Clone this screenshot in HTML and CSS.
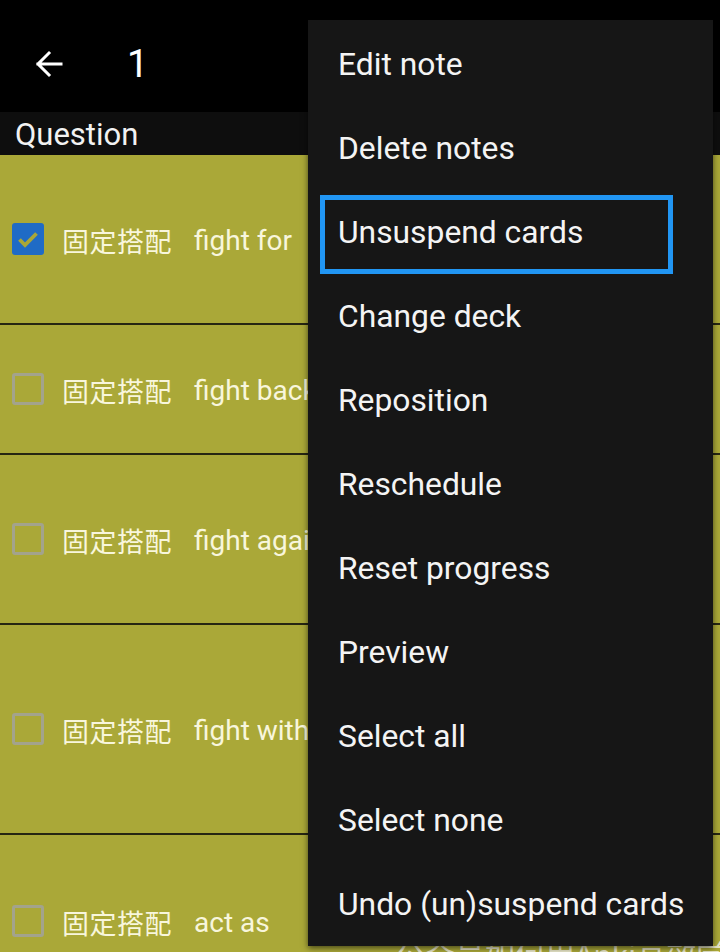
FILE: index.html
```html
<!DOCTYPE html>
<html>
<head>
<meta charset="utf-8">
<link rel="stylesheet" href="styles.css">
</head>
<body>
<div class="screen">
  <header class="appbar">
    <svg class="back" viewBox="0 0 28 28" width="28" height="28"><path d="M26 14H3M14 3L3 14l11 11" fill="none" stroke="#fff" stroke-width="3" stroke-linecap="square"/></svg>
    <span class="title">1</span>
  </header>
  <div class="colhead">Question</div>
  <div class="list">
    <div class="row h168">
      <span class="cb checked"><svg viewBox="0 0 32 32" width="32" height="32"><path d="M7.5 16.5l5.5 5.5L24.5 10.5" fill="none" stroke="#a9a738" stroke-width="3.8"/></svg></span>
      <span class="q"><span class="zh">固定搭配</span><span class="en">fight for</span></span>
    </div>
    <div class="row h128">
      <span class="cb"></span>
      <span class="q"><span class="zh">固定搭配</span><span class="en">fight back</span></span>
    </div>
    <div class="row h168">
      <span class="cb"></span>
      <span class="q"><span class="zh">固定搭配</span><span class="en">fight against</span></span>
    </div>
    <div class="row h208">
      <span class="cb"></span>
      <span class="q"><span class="zh">固定搭配</span><span class="en">fight with</span></span>
    </div>
    <div class="row h172">
      <span class="cb"></span>
      <span class="q"><span class="zh">固定搭配</span><span class="en">act as</span></span>
    </div>
  </div>
  <div class="watermark">公众号如何用Anki高效学习</div>
  <ul class="menu">
    <li>Edit note</li>
    <li>Delete notes</li>
    <li class="focused">Unsuspend cards</li>
    <li>Change deck</li>
    <li>Reposition</li>
    <li>Reschedule</li>
    <li>Reset progress</li>
    <li>Preview</li>
    <li>Select all</li>
    <li>Select none</li>
    <li>Undo (un)suspend cards</li>
  </ul>
</div>
</body>
</html>
```
FILE: styles.css
```css
html, body {
  margin: 0;
  padding: 0;
  background: #000;
}
.screen {
  position: relative;
  width: 720px;
  height: 952px;
  overflow: hidden;
  font-family: Roboto, "Noto Sans CJK SC", sans-serif;
  color: #fff;
}
.appbar {
  box-sizing: border-box;
  height: 112px;
  padding-top: 16px;
  background: #000;
  display: flex;
  align-items: center;
}
.back {
  margin-left: 35px;
}
.title {
  margin-left: 64px;
  font-size: 38px;
  line-height: 1;
  color: #fff;
}
.colhead {
  height: 43px;
  background: #0e0e0e;
  font-size: 31px;
  line-height: 45px;
  padding-left: 15px;
  color: #f2f2f2;
}
.list {
  background: #aaa838;
}
.row {
  display: flex;
  align-items: center;
  background: #aaa838;
  border-bottom: 2px solid #262612;
}
.h168 { height: 168px; }
.h128 { height: 128px; }
.h208 { height: 208px; }
.h172 { height: 172px; }
.cb {
  box-sizing: border-box;
  width: 32px;
  height: 32px;
  margin-left: 12px;
  border: 3px solid #a3a38c;
  border-radius: 3px;
  display: flex;
  align-items: center;
  justify-content: center;
  flex: none;
}
.cb.checked {
  border: none;
  background: #1f6bc6;
}
.q {
  margin-left: 18px;
  margin-top: 2px;
  display: flex;
  align-items: center;
  color: #f8f6dc;
  white-space: nowrap;
}
.zh {
  font-family: "Noto Sans CJK SC", sans-serif;
  font-size: 27px;
  letter-spacing: 0.5px;
}
.en {
  font-family: Roboto, sans-serif;
  font-size: 28px;
  margin-left: 22px;
}
.watermark {
  position: absolute;
  left: 395px;
  top: 931px;
  font-family: "Noto Sans CJK SC", sans-serif;
  font-size: 30px;
  color: #e8e6c8;
  white-space: nowrap;
}
.menu {
  position: absolute;
  left: 308px;
  top: 20px;
  width: 405px;
  margin: 0;
  padding: 2px 0 0;
  list-style: none;
  background: #161616;
  box-shadow: 0 2px 6px rgba(0,0,0,0.6);
}
.menu li {
  position: relative;
  height: 84px;
  line-height: 84px;
  padding-left: 30px;
  font-size: 31.8px;
  color: #f4f4f4;
}
.menu li.focused::after {
  content: "";
  position: absolute;
  left: 12px;
  right: 40px;
  top: 5px;
  bottom: 0;
  border: 5px solid #2196f3;
  box-sizing: border-box;
}
```
